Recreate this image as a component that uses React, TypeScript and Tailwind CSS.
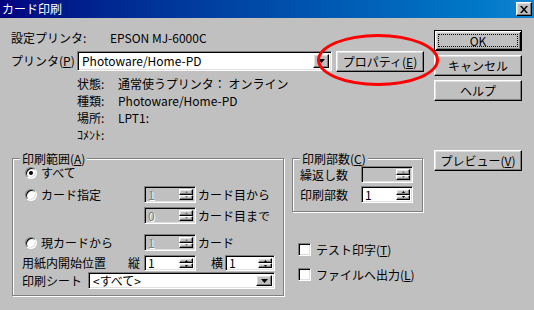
import React from 'react';

const raised =
  'bg-[#c0c0c0] border border-t-white border-l-white border-r-black border-b-black shadow-[inset_-1px_-1px_#808080,inset_1px_1px_#dfdfdf]';
const sunken =
  'border border-t-[#808080] border-l-[#808080] border-r-white border-b-white shadow-[inset_1px_1px_#000,inset_-1px_-1px_#dfdfdf]';

function Key({ k }: { k: string }) {
  return <span className="underline underline-offset-1">{k}</span>;
}

function Btn({ children, className = '' }: { children: React.ReactNode; className?: string }) {
  return <div className={`${raised} h-[21px] flex items-center justify-center ${className}`}>{children}</div>;
}

function DropBtn() {
  return (
    <div className={`${raised} w-[16px] h-full flex items-center justify-center`}>
      <svg width="7" height="4" viewBox="0 0 7 4">
        <polygon points="0,0 7,0 3.5,4" fill="#000" />
      </svg>
    </div>
  );
}

function Combo({ value, className = '' }: { value: string; className?: string }) {
  return (
    <div className={`${sunken} bg-white p-[2px] flex ${className}`}>
      <div className="flex-1 pl-[2px] flex items-center whitespace-nowrap">{value}</div>
      <DropBtn />
    </div>
  );
}

function SpinHalf({ up, disabled }: { up?: boolean; disabled?: boolean }) {
  return (
    <div className={`${raised} flex-1 flex items-center justify-center`}>
      <svg width="3" height="2" viewBox="0 0 3 2">
        <polygon points={up ? '0,2 3,2 1.5,0' : '0,0 3,0 1.5,2'} fill={disabled ? '#808080' : '#000'} />
      </svg>
    </div>
  );
}

function Spin({ value, disabled = false, className = '' }: { value: string; disabled?: boolean; className?: string }) {
  return (
    <div className={`${sunken} p-[2px] flex ${disabled ? 'bg-[#c0c0c0]' : 'bg-white'} ${className}`}>
      <div
        className={`flex-1 pl-[1px] flex items-center ${
          disabled ? 'text-[#808080] [text-shadow:1px_1px_0_#fff]' : 'text-black'
        }`}
      >
        {value}
      </div>
      <div className="w-[14px] flex flex-col">
        <SpinHalf up disabled={disabled} />
        <SpinHalf disabled={disabled} />
      </div>
    </div>
  );
}

function Radio({ checked = false }: { checked?: boolean }) {
  return (
    <div className="w-[12px] h-[12px] rounded-full bg-white border border-t-[#808080] border-l-[#808080] border-r-white border-b-white shadow-[inset_1px_1px_#000,inset_-1px_-1px_#dfdfdf] flex items-center justify-center">
      {checked && <div className="w-[4px] h-[4px] rounded-full bg-black" />}
    </div>
  );
}

function Check() {
  return <div className={`${sunken} w-[13px] h-[13px] bg-white`} />;
}

function Group({ label, className = '', children }: { label: React.ReactNode; className?: string; children: React.ReactNode }) {
  return (
    <div className={`relative border border-[#808080] shadow-[inset_1px_1px_#fff,1px_1px_#fff] ${className}`}>
      <div className="absolute left-[7px] -top-[7px] px-[2px] leading-[14px] bg-[#c0c0c0] whitespace-nowrap">{label}</div>
      {children}
    </div>
  );
}

const info = [
  ['状態:', '通常使うプリンタ： オンライン'],
  ['種類:', 'Photoware/Home-PD'],
  ['場所:', 'LPT1:'],
  ['ｺﾒﾝﾄ:', ''],
];

export default function App() {
  return (
    <div className="relative w-[534px] h-[310px] overflow-hidden bg-[#c0c0c0] text-[12px] leading-[16px] text-black font-['Noto_Sans_CJK_JP','Noto_Sans',sans-serif]">
      {/* title bar */}
      <div className="h-[18px] flex items-center justify-between pl-[2px] pr-[2px] bg-linear-to-r from-[#000080] to-[#1084d0]">
        <span className="text-white">カード印刷</span>
        <div className={`${raised} w-[16px] h-[14px] flex items-center justify-center`}>
          <svg width="8" height="7" viewBox="0 0 8 7">
            <path d="M0 0h2l2 2.5L6 0h2L5 3.5 8 7H6L4 4.5 2 7H0l3-3.5z" fill="#000" />
          </svg>
        </div>
      </div>

      <div className="flex pl-[11px]">
        {/* left side */}
        <div className="w-[413px] flex flex-col">
          <div className="mt-[12px] h-[16px] flex items-center">
            <span className="w-[99px]">設定プリンタ:</span>
            <span>EPSON MJ-6000C</span>
          </div>

          <div className="mt-[5px] h-[21px] flex items-start">
            <span className="w-[66px] h-[20px] flex items-center">
              プリンタ(<Key k="P" />)
            </span>
            <Combo className="w-[255px] h-[20px]" value="Photoware/Home-PD" />
            <Btn className="ml-[4px] w-[88px]">
              プロパティ(<Key k="E" />)
            </Btn>
          </div>

          <div className="mt-[3px] pl-[66px] flex flex-col">
            {info.map(([k, v]) => (
              <div key={k} className="h-[17px] flex items-center">
                <span className="w-[41px]">{k}</span>
                <span>{v}</span>
              </div>
            ))}
          </div>

          <div className="mt-[15px] pl-[1px] flex items-start">
            {/* 印刷範囲 */}
            <Group
              className="w-[272px] h-[138px] pt-[8px] pl-[9px]"
              label={
                <>
                  印刷範囲(<Key k="A" />)
                </>
              }
            >
              <div className="h-[12px] flex items-center">
                <div className="ml-[3px] flex items-center gap-[4px]">
                  <Radio checked />
                  <span className="leading-[12px]">すべて</span>
                </div>
              </div>

              <div className="mt-[7px] h-[17px] flex items-center">
                <div className="w-[122px] flex items-center">
                  <div className="ml-[3px] flex items-center gap-[4px]">
                    <Radio />
                    <span>カード指定</span>
                  </div>
                </div>
                <Spin value="1" disabled className="w-[52px] h-[17px]" />
                <span className="ml-[2px]">カード目から</span>
              </div>

              <div className="mt-[4px] h-[17px] flex items-center">
                <div className="w-[122px]" />
                <Spin value="0" disabled className="w-[52px] h-[17px]" />
                <span className="ml-[2px]">カード目まで</span>
              </div>

              <div className="mt-[10px] h-[17px] flex items-center">
                <div className="w-[122px] flex items-center">
                  <div className="ml-[3px] flex items-center gap-[4px]">
                    <Radio />
                    <span>現カードから</span>
                  </div>
                </div>
                <Spin value="1" disabled className="w-[52px] h-[17px]" />
                <span className="ml-[2px]">カード</span>
              </div>

              <div className="mt-[4px] h-[16px] flex items-center">
                <div className="w-[122px] flex items-center">
                  <span>用紙内開始位置</span>
                  <span className="ml-auto mr-[4px]">縦</span>
                </div>
                <Spin value="1" className="w-[52px] h-[16px]" />
                <div className="w-[29px] flex justify-end pr-[2px]">横</div>
                <Spin value="1" className="w-[50px] h-[16px]" />
              </div>

              <div className="mt-[1px] h-[17px] flex items-center">
                <span className="w-[66px]">印刷シート</span>
                <Combo className="w-[187px] h-[17px]" value="<すべて>" />
              </div>
            </Group>

            {/* 印刷部数 + checkboxes */}
            <div className="ml-[8px] flex flex-col">
              <Group
                className="w-[131px] h-[54px] pt-[7px] pl-[7px]"
                label={
                  <>
                    印刷部数(<Key k="C" />)
                  </>
                }
              >
                <div className="h-[17px] flex items-center">
                  <span className="w-[61px]">繰返し数</span>
                  <Spin value="" disabled className="w-[52px] h-[17px]" />
                </div>
                <div className="mt-[3px] h-[17px] flex items-center">
                  <span className="w-[61px]">印刷部数</span>
                  <Spin value="1" className="w-[52px] h-[17px]" />
                </div>
              </Group>

              <div className="mt-[31px] pl-[6px] flex flex-col gap-[12px]">
                <div className="h-[13px] flex items-center gap-[5px]">
                  <Check />
                  <span>
                    テスト印字(<Key k="T" />)
                  </span>
                </div>
                <div className="h-[13px] flex items-center gap-[5px]">
                  <Check />
                  <span>
                    ファイルへ出力(<Key k="L" />)
                  </span>
                </div>
              </div>
            </div>
          </div>
        </div>

        {/* right buttons */}
        <div className="w-[88px] ml-[10px] flex flex-col">
          <div className="mt-[12px] h-[21px] p-[3px] bg-[#c0c0c0] border border-black shadow-[inset_1px_1px_#fff,inset_-1px_-1px_#000,inset_2px_2px_#dfdfdf,inset_-2px_-2px_#808080]">
            <div className="h-full border border-dotted border-black flex items-center justify-center">OK</div>
          </div>
          <Btn className="mt-[4px]">キャンセル</Btn>
          <Btn className="mt-[4px]">ヘルプ</Btn>
          <Btn className="mt-[49px]">
            プレビュー(<Key k="V" />)
          </Btn>
        </div>
      </div>

      {/* red annotation ellipse */}
      <div className="absolute left-[317px] top-[34px] w-[122px] h-[52px] rounded-[50%] border-[3px] border-[#ff0000] pointer-events-none" />
    </div>
  );
}
